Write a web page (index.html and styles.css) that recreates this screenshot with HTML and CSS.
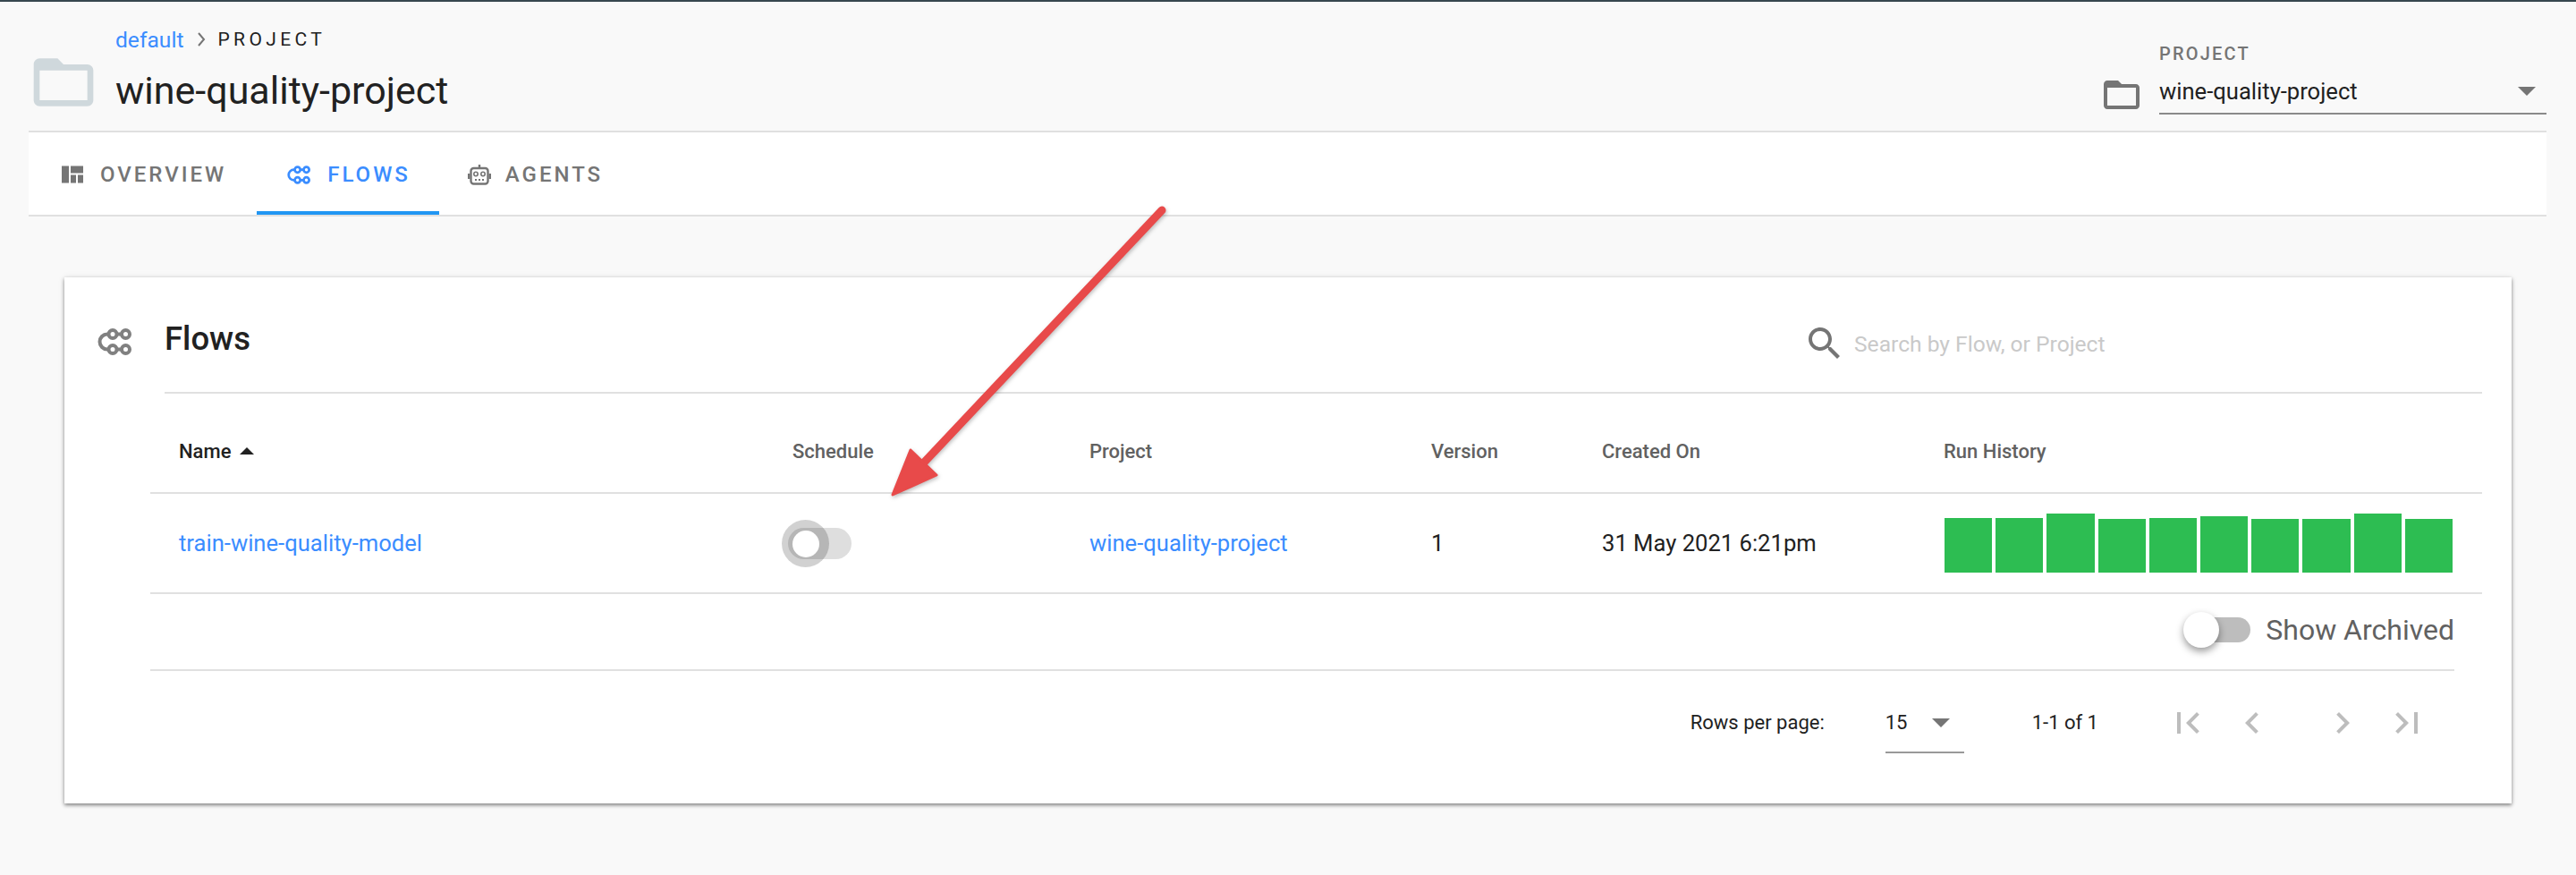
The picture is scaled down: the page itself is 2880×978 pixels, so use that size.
FILE: index.html
```html
<!DOCTYPE html>
<html lang="en">
<head>
    <meta charset="UTF-8">
    <title>wine-quality-project</title>
    <link rel="stylesheet" href="styles.css">
</head>
<body>
    <header class="page-head">
        <svg class="big-folder" viewBox="0 0 24 24"><path d="M20 6h-8l-2-2H4c-1.1 0-1.99.9-1.99 2L2 18c0 1.1.9 2 2 2h16c1.1 0 2-.9 2-2V8c0-1.1-.9-2-2-2zm0 12H4V8h16v10z"/></svg>
        <div class="head-text">
            <div class="crumbs">
                <a class="crumb-link">default</a>
                <svg class="crumb-sep" viewBox="0 0 10 18"><path d="M2 2l6 7-6 7"/></svg>
                <span class="crumb-now">PROJECT</span>
            </div>
            <h1 class="title">wine-quality-project</h1>
        </div>
        <div class="project-pick">
            <svg class="pick-folder" viewBox="0 0 24 24"><path d="M20 6h-8l-2-2H4c-1.1 0-1.99.9-1.99 2L2 18c0 1.1.9 2 2 2h16c1.1 0 2-.9 2-2V8c0-1.1-.9-2-2-2zm0 12H4V8h16v10z"/></svg>
            <div class="pick-field">
                <div class="pick-label">PROJECT</div>
                <div class="pick-value">wine-quality-project<span class="caret pick-caret"></span></div>
            </div>
        </div>
    </header>

    <nav class="tabs">
        <a class="tab">
            <svg class="tab-icon" viewBox="0 0 24 19"><path d="M0 0h8v19H0zM10 0h14v8H10zM10 10h6v9h-6zM18 10h6v9h-6z"/></svg>
            OVERVIEW
        </a>
        <a class="tab tab-active">
            <svg class="tab-icon flow-icon" viewBox="0 0 38 30"><path d="M12.500 6.500H11a8.500 8.500 0 0 0 0 17h1.500M21.500 6.500H27M21.500 23.500H27"/><circle cx="17" cy="6.500" r="4.500"/><circle cx="31.500" cy="6.500" r="4.500"/><circle cx="17" cy="23.500" r="4.500"/><circle cx="31.500" cy="23.500" r="4.500"/></svg>
            FLOWS
        </a>
        <a class="tab">
            <svg class="tab-icon agent-icon" viewBox="0 0 26 24"><path class="agent-line" d="M13 1v4"/><rect class="agent-line" x="3.500" y="5" width="19" height="17.500" rx="3"/><path d="M0 11h2.500v6H0zM23.500 11H26v6h-2.500z"/><circle class="agent-line thin" cx="9" cy="11.500" r="2.200"/><circle class="agent-line thin" cx="17" cy="11.500" r="2.200"/><path d="M8 17h2v2H8zM12 17h2v2h-2zM16 17h2v2h-2z"/></svg>
            AGENTS
        </a>
    </nav>

    <main class="card">
        <div class="card-head">
            <svg class="card-icon flow-icon" viewBox="0 0 38 30"><path d="M12.500 6.500H11a8.500 8.500 0 0 0 0 17h1.500M21.500 6.500H27M21.500 23.500H27"/><circle cx="17" cy="6.500" r="4.500"/><circle cx="31.500" cy="6.500" r="4.500"/><circle cx="17" cy="23.500" r="4.500"/><circle cx="31.500" cy="23.500" r="4.500"/></svg>
            <div class="card-title-row">
                <h2 class="card-title">Flows</h2>
                <div class="search">
                    <svg class="search-icon" viewBox="0 0 24 24"><path d="M15.5 14h-.79l-.28-.27C15.41 12.59 16 11.11 16 9.5 16 5.91 13.09 3 9.5 3S3 5.91 3 9.5 5.91 16 9.5 16c1.610 0 3.090-.59 4.230-1.570l.27.28v.79l5 4.990L20.490 19l-4.990-5zm-6 0C7.010 14 5 11.990 5 9.500S7.010 5 9.500 5 14 7.010 14 9.500 11.990 14 9.500 14z"/></svg>
                    <span class="search-hint">Search by Flow, or Project</span>
                </div>
            </div>
        </div>

        <div class="row row-head">
            <div class="th th-name">Name <span class="sort-up"></span></div>
            <div class="th">Schedule</div>
            <div class="th">Project</div>
            <div class="th">Version</div>
            <div class="th">Created On</div>
            <div class="th">Run History</div>
        </div>
        <div class="row row-data">
            <a class="link">train-wine-quality-model</a>
            <div class="schedule">
                <div class="switch switch-schedule">
                    <span class="halo"></span>
                    <span class="knob"></span>
                </div>
            </div>
            <a class="link">wine-quality-project</a>
            <div class="cell">1</div>
            <div class="cell">31 May 2021 6:21pm</div>
            <div class="bars">
                <span class="bar" style="height: 61px"></span>
                <span class="bar" style="height: 61px"></span>
                <span class="bar" style="height: 66px"></span>
                <span class="bar" style="height: 60px"></span>
                <span class="bar" style="height: 61px"></span>
                <span class="bar" style="height: 63px"></span>
                <span class="bar" style="height: 60px"></span>
                <span class="bar" style="height: 60px"></span>
                <span class="bar" style="height: 66px"></span>
                <span class="bar" style="height: 60px"></span>
            </div>
        </div>

        <div class="archived">
            <div class="switch switch-archived">
                <span class="knob"></span>
            </div>
            <span class="archived-label">Show Archived</span>
        </div>

        <div class="pager">
            <span class="pager-label">Rows per page:</span>
            <div class="pager-select">15<span class="caret pager-caret"></span></div>
            <span class="pager-range">1-1 of 1</span>
            <svg class="pager-icon" viewBox="0 0 24 24"><path d="M18.410 16.590L13.820 12l4.590-4.590L17 6l-6 6 6 6zM6 6h2v12H6z"/></svg>
            <svg class="pager-icon prev" viewBox="0 0 24 24"><path d="M15.410 7.410L14 6l-6 6 6 6 1.410-1.410L10.830 12z"/></svg>
            <svg class="pager-icon next" viewBox="0 0 24 24"><path d="M10 6L8.590 7.410 13.170 12l-4.580 4.590L10 18l6-6z"/></svg>
            <svg class="pager-icon last" viewBox="0 0 24 24"><path d="M5.590 7.410L10.180 12l-4.590 4.590L7 18l6-6-6-6zM16 6h2v12h-2z"/></svg>
        </div>
    </main>

    <!-- Annotation arrow drawn over the page -->
    <svg class="arrow" viewBox="0 0 2880 978">
        <path d="M1299 235L1032 518" class="arrow-shaft"/>
        <path d="M998 553L1018 503 1047 531z" class="arrow-head"/>
    </svg>
</body>
</html>
```

FILE: styles.css
```css
* {
    box-sizing: border-box;
}

body {
    margin: 0;
    height: 978px;
    overflow: hidden;
    position: relative;
    background-color: #f9f9f9;
    border-top: 2px solid #37474f; /* dark strip at the very top */
    font-family: Roboto, "Liberation Sans", sans-serif;
    color: #212121;
}

/* Header */
.page-head {
    display: flex;
    height: 144px;
    padding: 0 33px 0 31px;
}

.big-folder {
    width: 80px;
    height: 80px;
    margin-top: 50px;
    fill: #cfd8dc;
}

.head-text {
    margin-left: 18px;
}

.crumbs {
    display: flex;
    align-items: center;
    height: 30px;
    margin-top: 27px;
}

.crumb-link {
    font-size: 24.600px;
    color: #3b8dff;
}

.crumb-sep {
    width: 10px;
    height: 18px;
    margin: 0 13px 0 15px;
    fill: none;
    stroke: #757575;
    stroke-width: 2;
}

.crumb-now {
    font-size: 21px;
    font-weight: 400;
    letter-spacing: 4.400px;
}

.title {
    margin: 16px 0 0;
    font-size: 43px;
    line-height: 52px;
    font-weight: 400;
}

.project-pick {
    display: flex;
    margin-left: auto;
}

.pick-folder {
    width: 48px;
    height: 48px;
    margin: 80px 18px 0 0;
    fill: #757575;
}

.pick-field {
    width: 433px;
    height: 126px;
    border-bottom: 2px solid #8a8a8a;
}

.pick-label {
    margin-top: 46px;
    font-size: 20px;
    line-height: 24px;
    font-weight: 500;
    letter-spacing: 2.200px;
    color: #757575;
}

.pick-value {
    display: flex;
    align-items: center;
    justify-content: space-between;
    margin-top: 14px;
    font-size: 25.600px;
    line-height: 32px;
}

.caret {
    width: 0;
    height: 0;
    border-left: 10px solid transparent;
    border-right: 10px solid transparent;
    border-top: 10px solid #757575;
}

.pick-caret {
    margin: 0 12px 0 0;
}

/* Tabs */
.tabs {
    display: flex;
    height: 96px;
    margin: 0 33px 0 32px;
    background-color: #fff;
    border-top: 2px solid #e0e0e0;
    border-bottom: 2px solid #e0e0e0;
}

.tab {
    display: flex;
    align-items: center;
    gap: 19px;
    height: 92px;
    padding: 2px 34px 0;
    font-size: 24px;
    font-weight: 500;
    letter-spacing: 3px;
    color: #757575;
}

.tab:first-child {
    padding-left: 37px;
}

.tab-active {
    padding: 6px 32px 0 34px;
    color: #3b8dff;
    border-bottom: 4px solid #2196f3;
}

.tab-icon {
    width: 24px;
    height: 20px;
    fill: #757575;
}

.tab-active .tab-icon {
    width: 26px;
    height: 21px;
}

.flow-icon {
    fill: none;
    stroke: #808080;
    stroke-width: 4;
}

.tab-active .flow-icon {
    stroke: #3b8dff;
}

.agent-icon {
    width: 26px;
    height: 24px;
    margin-right: -3px;
    margin-left: -2px;
}

.agent-line {
    fill: none;
    stroke: #757575;
    stroke-width: 2.400;
}

.agent-line.thin {
    stroke-width: 1.600;
}

/* Card */
.card {
    height: 588px;
    margin: 68px 72px 0;
    background-color: #fff;
    box-shadow: 0 2px 4px rgba(0, 0, 0, 0.45), 0 0 8px rgba(0, 0, 0, 0.08);
}

.card-head {
    display: flex;
    height: 130px;
    padding-left: 37px;
}

.card-icon {
    width: 38px;
    height: 30px;
    margin: 57px 37px 0 0;
}

.card-title-row {
    flex: 1;
    display: flex;
    margin-right: 33px;
    border-bottom: 2px solid #e0e0e0;
}

.card-title {
    margin: 49px 0 0;
    font-size: 36.500px;
    line-height: 40px;
    font-weight: 500;
}

.search {
    display: flex;
    align-items: center;
    margin: 50px 0 0 auto;
    width: 759px;
    height: 48px;
}

.search-icon {
    width: 48px;
    height: 48px;
    margin-right: 9px;
    fill: #757575;
}

.search-hint {
    font-size: 24.600px;
    color: #c9c9c9;
}

/* Table */
.row {
    display: grid;
    grid-template-columns: 686px 332px 382px 191px 382px 1fr;
    align-items: center;
    margin: 0 33px 0 96px;
    padding-left: 32px;
    border-bottom: 2px solid #e0e0e0;
}

.row-head {
    height: 112px;
    padding-top: 18px;
}

.row-data {
    height: 112px;
}

.th {
    font-size: 22px;
    font-weight: 500;
    color: #616161;
}

.th-name {
    display: flex;
    align-items: center;
    gap: 10px;
    color: #212121;
}

.sort-up {
    width: 0;
    height: 0;
    border-left: 8px solid transparent;
    border-right: 8px solid transparent;
    border-bottom: 8px solid #212121;
}

.link {
    font-size: 25.600px;
    color: #3b8dff;
}

.cell {
    font-size: 25.600px;
}

.bars {
    display: flex;
    align-items: flex-end;
    gap: 4px;
    height: 66px;
    margin-left: 1px;
}

.bar {
    width: 53.200px;
    background-color: #2dbd52;
}

/* Toggles */
.switch {
    position: relative;
}

.switch-schedule {
    width: 71px;
    height: 35px;
    margin-left: -5px;
    border-radius: 18px;
    background-color: #dedede;
}

.halo {
    position: absolute;
    left: -7px;
    top: -9px;
    width: 53px;
    height: 53px;
    border-radius: 50%;
    background-color: rgba(0, 0, 0, 0.18);
}

.knob {
    position: absolute;
    border-radius: 50%;
    background-color: #fff;
}

.switch-schedule .knob {
    left: 5px;
    top: 3px;
    width: 30px;
    height: 30px;
}

.archived {
    display: flex;
    align-items: center;
    justify-content: flex-end;
    gap: 17px;
    height: 86px;
    margin: 0 64px 0 96px;
    padding-bottom: 4px;
    border-bottom: 2px solid #e0e0e0;
}

.switch-archived {
    width: 69px;
    height: 28px;
    border-radius: 14px;
    background-color: #bdbdbd;
}

.switch-archived .knob {
    left: -6px;
    top: -6px;
    width: 40px;
    height: 40px;
    box-shadow: 0 4px 8px rgba(0, 0, 0, 0.4);
}

.archived-label {
    font-size: 32px;
    color: #616161;
}

/* Pagination */
.pager {
    display: flex;
    align-items: flex-start;
    justify-content: flex-end;
    height: 146px;
    padding: 34px 93px 0 0;
    font-size: 22px;
    line-height: 48px;
}

.pager-label {
    width: 218px;
}

.pager-select {
    display: flex;
    align-items: flex-start;
    width: 88px;
    height: 58px;
    margin-right: 76px;
    font-size: 22px;
    border-bottom: 2px solid #999;
}

.pager-caret {
    margin: 19px 0 0 28px;
}

.pager-range {
    margin-right: 76px;
}

.pager-icon {
    width: 48px;
    height: 48px;
    fill: #bdbdbd;
}

.prev {
    margin-left: 24px;
}

.next {
    margin-left: 53px;
}

.last {
    margin-left: 24px;
}

/* Arrow overlay */
.arrow {
    position: absolute;
    left: 0;
    top: -2px;
    width: 2880px;
    height: 978px;
    filter: drop-shadow(1px 2px 2px rgba(0, 0, 0, 0.25));
}

.arrow-shaft {
    fill: none;
    stroke: #e84a4a;
    stroke-width: 9;
    stroke-linecap: round;
}

.arrow-head {
    fill: #e84a4a;
    stroke: #e84a4a;
    stroke-width: 3;
    stroke-linejoin: round;
}
```
